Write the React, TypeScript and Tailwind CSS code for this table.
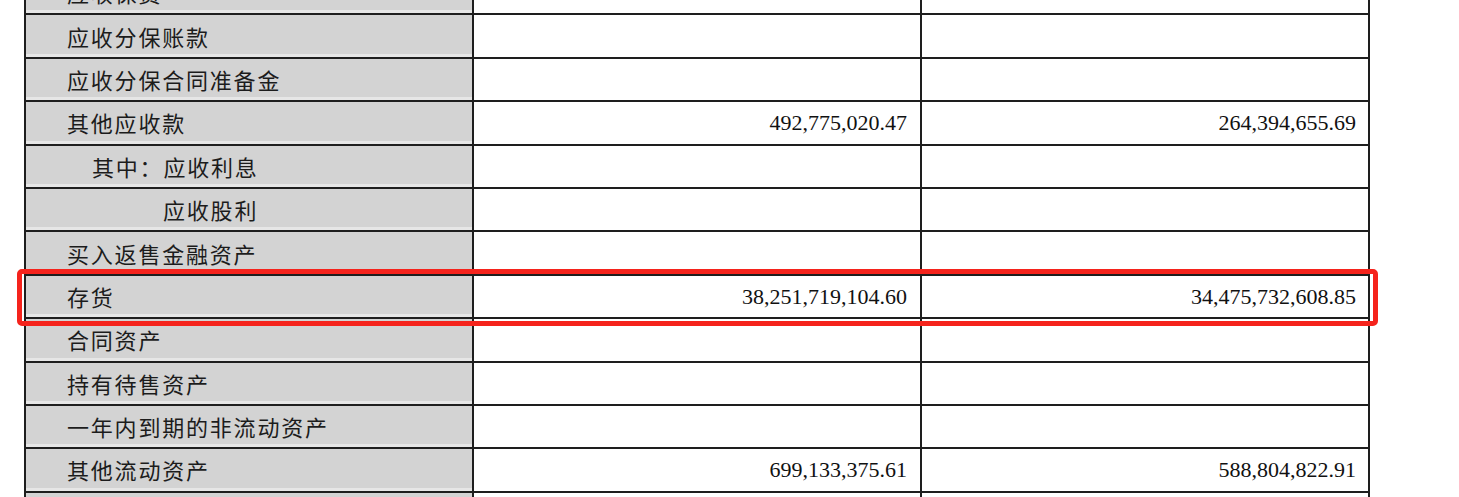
const rows: { label: string; indent?: number; a?: string; b?: string }[] = [
  { label: '应收保费' },
  { label: '应收分保账款' },
  { label: '应收分保合同准备金' },
  { label: '其他应收款', a: '492,775,020.47', b: '264,394,655.69' },
  { label: '其中：应收利息', indent: 1 },
  { label: '应收股利', indent: 2 },
  { label: '买入返售金融资产' },
  { label: '存货', a: '38,251,719,104.60', b: '34,475,732,608.85' },
  { label: '合同资产' },
  { label: '持有待售资产' },
  { label: '一年内到期的非流动资产' },
  { label: '其他流动资产', a: '699,133,375.61', b: '588,804,822.91' },
  { label: '' },
]

const cjk = { fontFamily: '"Noto Sans CJK SC", "Noto Sans", sans-serif' }
const serif = { fontFamily: '"Liberation Serif", "DejaVu Serif", serif' }

export default function App() {
  return (
    <div className="relative h-[497px] w-[1459px] overflow-hidden bg-white">
      <div className="-mt-[28px] pl-[24px]">
        <div className="w-[1346px] border-x-2 border-[#1e1e1e]">
          {rows.map((row, i) => (
            <div key={i} className="flex h-[43.4px] border-b-2 border-[#1e1e1e]">
              <div
                className={`flex w-[448px] shrink-0 items-center border-r-2 border-[#1e1e1e] bg-[#d3d3d3] text-[22px] tracking-[1.8px] text-[#1c1c1c] shadow-[inset_0_-3px_0_#e6e6e6] ${
                  row.indent === 1 ? 'pl-[66px]' : row.indent === 2 ? 'pl-[137px]' : 'pl-[41px]'
                }`}
                style={cjk}
              >
                {row.label}
              </div>
              <div
                className="flex w-[448px] shrink-0 items-center justify-end border-r-2 border-[#1e1e1e] pr-[13px] text-[22px] text-[#111]"
                style={serif}
              >
                {row.a}
              </div>
              <div
                className="flex flex-1 items-center justify-end pr-[12px] text-[22px] text-[#111]"
                style={serif}
              >
                {row.b}
              </div>
            </div>
          ))}
        </div>
      </div>
      <div className="pointer-events-none absolute left-[17px] top-[269px] h-[57px] w-[1361px] rounded-[5px] border-[5px] border-[#f5231c]" />
    </div>
  )
}
